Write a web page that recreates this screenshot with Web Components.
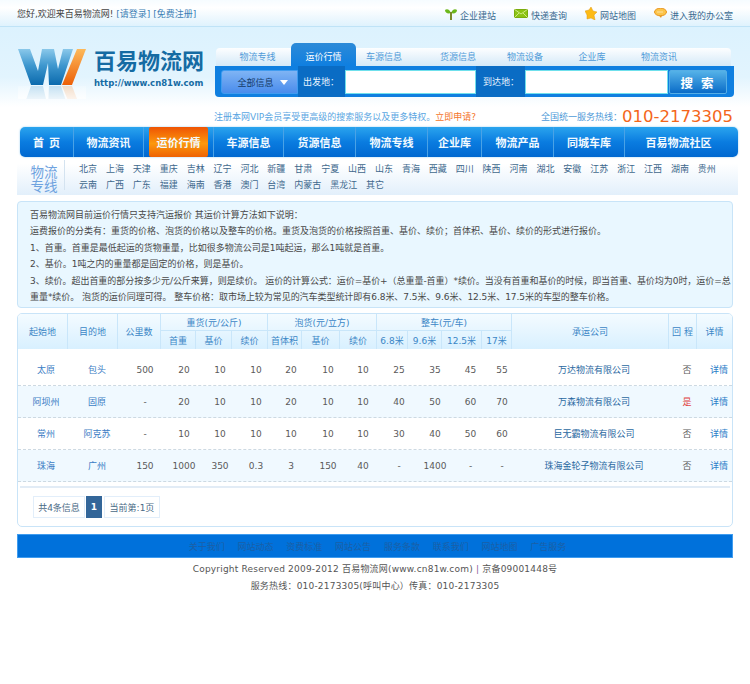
<!DOCTYPE html>
<html lang="zh-CN">
<head>
<meta charset="utf-8">
<title>百易物流网</title>
<style>
html, body { margin: 0; background: #fff; }
body {
    font: 9px "DejaVu Sans", "Noto Sans CJK SC", sans-serif;
    color: #555;
    width: 750px;
    height: 684px;
    overflow: hidden;
}
</style>
</head>
<body>
<site-topbar></site-topbar>
<site-header></site-header>
<main-nav></main-nav>
<city-panel></city-panel>
<notice-box>
    <div>百易物流网目前运价行情只支持汽运报价 其运价计算方法如下说明&#65306;</div>
    <div>运费报价的分类有&#65306;重货的价格、泡货的价格以及整车的价格。重货及泡货的价格按照首重、基价、续价&#65307;首体积、基价、续价的形式进行报价。</div>
    <div>1、首重。首重是最低起运的货物重量&#65292;比如很多物流公司是1吨起运&#65292;那么1吨就是首重。</div>
    <div>2、基价。1吨之内的重量都是固定的价格&#65292;则是基价。</div>
    <div style="letter-spacing:-.05px">3、续价。超出首重的部分按多少元/公斤来算&#65292;则是续价。 运价的计算公式&#65306;运价=基价+&#65288;总重量-首重&#65289;*续价。当没有首重和基价的时候&#65292;即当首重、基价均为0时&#65292;运价=总重量*续价。 泡货的运价同理可得。 整车价格&#65306;取市场上较为常见的汽车类型统计即有6.8米、7.5米、9.6米、12.5米、17.5米的车型的整车价格。</div>
</notice-box>
<rate-table>
    <rate-row data="太原|包头|500|20|10|10|20|10|10|25|35|45|55|万达物流有限公司|否"></rate-row>
    <rate-row alt data="阿坝州|固原|-|20|10|10|20|10|10|40|50|60|70|万森物流有限公司|是"></rate-row>
    <rate-row data="常州|阿克苏|-|10|10|10|10|10|10|30|40|50|60|巨无霸物流有限公司|否"></rate-row>
    <rate-row alt data="珠海|广州|150|1000|350|0.3|3|150|40|-|1400|-|-|珠海金轮子物流有限公司|否"></rate-row>
</rate-table>
<site-footer></site-footer>

<script>
class SiteTopbar extends HTMLElement {
    constructor() {
        super()
        this.attachShadow({ mode: 'open' })
    }
    connectedCallback() {
        this.shadowRoot.innerHTML = `
        <style>
        :host {
            display: flex;
            justify-content: space-between;
            align-items: center;
            height: 26px;
            padding: 0 17px;
            width: 716px;
            background: linear-gradient(#f6fcff, #fff 30%, #dff2fd);
            border-bottom: 1px solid #bfe3f7;
            color: #444;
        }
        a { color: #3d7fb5; }
        nav { display: flex; padding-top: 4px; }
        nav span { display: flex; align-items: center; gap: 3px; color: #3a6a90; margin-right: 18px; }
        nav span:last-child { margin-right: 0; }
        svg { display: block; margin-top: -4px; }
        </style>
        <div>您好,欢迎来百易物流网! <a>[请登录]</a> <a>[免费注册]</a></div>
        <nav>
            <span><svg width="12" height="13" viewBox="0 0 12 13"><path d="M6 6C4 1 1 2 0 3c0 3 3 4 6 3zM6 6c2-5 5-4 6-3 0 3-3 4-6 3z" fill="#6cb81c"/><rect x="5" y="5" width="2" height="8" fill="#7a8a2a"/></svg>企业建站</span>
            <span><svg width="14" height="9" viewBox="0 0 14 9"><rect width="14" height="9" fill="#8cc414" stroke="#5f8a08" stroke-width=".8"/><path d="M0 0l7 5 7-5M0 9l5-5M14 9L9 4" fill="none" stroke="#e0f2a0" stroke-width=".8"/></svg>快递查询</span>
            <span><svg width="12" height="13" viewBox="0 0 12 13"><path d="M6 0l2 4 4 1-3 3 1 5-4-2-4 1 0-4L0 4l4-1z" fill="#fdbb16" stroke="#e09a10" stroke-width=".5"/></svg>网站地图</span>
            <span><svg width="13" height="10" viewBox="0 0 13 10"><ellipse cx="6.5" cy="4" rx="6" ry="3.8" fill="#fcc54a" stroke="#e8951c"/><path d="M5 7.5L7 10l1-2.5z" fill="#e8951c"/><path d="M3.5 4h6" stroke="#fff" stroke-dasharray="1 1"/></svg>进入我的办公室</span>
        </nav>
        `
    }
}

class SiteLogo extends HTMLElement {
    constructor() {
        super()
        this.attachShadow({ mode: 'open' })
    }
    connectedCallback() {
        const w = 'M0 0h12l8 22 4-22h12l4 20 5-20h10L43 36H31l-1-22-5 22H13z'
        this.shadowRoot.innerHTML = `
        <style>
        :host { display: flex; align-items: flex-start; gap: 8px; }
        b {
            display: block;
            font-size: 22px;
            line-height: 24px;
            color: #156ba3;
            margin-top: 1px;
            white-space: nowrap;
        }
        small {
            display: block;
            font-size: 8.5px;
            font-weight: bold;
            line-height: 10px;
            margin-top: 4px;
            color: #156ba3;
            white-space: nowrap;
        }
        </style>
        <svg width="68" height="50" viewBox="0 0 68 50">
            <defs>
                <linearGradient id="bl" x1="0" y1="0" x2="0" y2="1"><stop offset="0" stop-color="#8ac8ea"/><stop offset=".45" stop-color="#3f98cf"/><stop offset="1" stop-color="#0b6aad"/></linearGradient>
                <linearGradient id="or" x1="0" y1="0" x2="0" y2="1"><stop offset="0" stop-color="#fdb95a"/><stop offset="1" stop-color="#ec5f08"/></linearGradient>
                <linearGradient id="fd" x1="0" y1="0" x2="0" y2="1"><stop offset="0" stop-color="#fff" stop-opacity=".25"/><stop offset="1" stop-color="#fff" stop-opacity="1"/></linearGradient>
            </defs>
            <path d="${w}" fill="url(#bl)"/>
            <path d="M44 36L59 0h9L54 36z" fill="url(#or)"/>
            <g transform="translate(0 73) scale(1 -1)" opacity=".35">
                <path d="${w}" fill="#5aa8d8"/>
                <path d="M44 36L59 0h9L54 36z" fill="#f39a50"/>
            </g>
            <rect y="37" width="68" height="13" fill="url(#fd)" opacity=".7"/>
        </svg>
        <div><b>百易物流网</b><small>http://www.cn81w.com</small></div>
        `
    }
}

class SearchBox extends HTMLElement {
    constructor() {
        super()
        this.attachShadow({ mode: 'open' })
    }
    connectedCallback() {
        this.shadowRoot.innerHTML = `
        <style>
        :host { display: block; width: 519px; }
        .tabs {
            position: relative;
            display: flex;
            align-items: flex-end;
            height: 23px;
            margin-left: 1px;
            width: 515px;
            color: #4f9ad8;
        }
        .tabs::before {
            content: "";
            position: absolute;
            left: 0; right: 0; bottom: 0;
            height: 18px;
            border-radius: 4px 4px 0 0;
            background: linear-gradient(#fdfeff, #d4e9f8);
        }
        .tabs span {
            position: relative;
            height: 18px;
            line-height: 19px;
            text-align: center;
            white-space: nowrap;
            box-sizing: border-box;
        }
        .tabs .on {
            height: 23px;
            line-height: 29px;
            color: #fff;
            border-radius: 5px 5px 0 0;
            background: linear-gradient(#2c8ad8, #0f7fe0);
        }
        .bar {
            display: flex;
            align-items: stretch;
            height: 31px;
            background: #0f7fe0;
            border-radius: 0 0 4px 4px;
            color: #eaf6ff;
        }
        .sel {
            width: 77px;
            height: 24px;
            margin: 4px 0 3px 6px;
            box-sizing: border-box;
            border: 1px solid #3f9cf0;
            background: linear-gradient(#7fb4f4, #4a8cec);
            color: #143a66;
            display: flex;
            align-items: center;
            justify-content: center;
            gap: 6px;
            padding-left: 6px;
            border-radius: 3px 0 0 3px;
        }
        .sel i {
            width: 0; height: 0;
            border: 4px solid transparent;
            border-top: 5px solid #fff;
            border-bottom: 0;
        }
        .lb {
            display: flex;
            align-items: center;
            background: #0a6cc4;
            padding-left: 5px;
            box-sizing: border-box;
            white-space: nowrap;
        }
        input {
            display: block;
            box-sizing: border-box;
            margin: 4px 0 3px 0;
            height: 24px;
            border: 1px solid #6fe0ec;
            background: #fff;
            padding: 0;
        }
        button {
            width: 58px;
            height: 24px;
            margin: 4px 0 3px 1px;
            box-sizing: border-box;
            padding: 0 0 0 6px;
            border: 1px solid #55aee6;
            border-radius: 2px;
            background: linear-gradient(#55b2e8, #0a6cc8);
            color: #fff;
            font: bold 12.5px "Noto Sans CJK SC", sans-serif;
            letter-spacing: 8px;
        }
        </style>
        <div class="tabs">
            <span style="width:75px;padding-left:8px">物流专线</span>
            <span class="on" style="width:65px">运价行情</span>
            <span style="width:56px">车源信息</span>
            <span style="width:92px">货源信息</span>
            <span style="width:42px">物流设备</span>
            <span style="width:92px">企业库</span>
            <span style="width:42px">物流资讯</span>
        </div>
        <div class="bar">
            <div class="sel">全部信息<i></i></div>
            <div class="lb" style="width:47px">出发地&#65306;</div>
            <input style="width:131px">
            <div class="lb" style="width:49px;padding-left:7px">到达地&#65306;</div>
            <input style="width:143px">
            <button>搜索</button>
        </div>
        `
    }
}

class SiteHeader extends HTMLElement {
    constructor() {
        super()
        this.attachShadow({ mode: 'open' })
    }
    connectedCallback() {
        this.shadowRoot.innerHTML = `
        <style>
        :host {
            display: flex;
            height: 100px;
            background: linear-gradient(#dcf2fe 0, #e2f4fe 50%, #fff 80%);
        }
        site-logo { margin: 22px 0 0 18px; width: 197px; flex: none; }
        .right { padding-top: 16px; }
        .promo {
            display: flex;
            justify-content: space-between;
            align-items: flex-end;
            height: 27px;
            margin-left: -1px;
            width: 520px;
            color: #5aa6e2;
            white-space: nowrap;
        }
        .promo em { font-style: normal; color: #f4742a; }
        .promo .p1 { margin-bottom: 1px; line-height: 12px;}
        .hot { display: flex; align-items: flex-end; color: #4f9ad8; line-height: 13px; margin-right: 1px; }
        .hot b { font-weight: normal; font-size: 16.5px; line-height: 20px; color: #f4661a; margin-bottom: -3px; }
        </style>
        <site-logo></site-logo>
        <div class="right">
            <search-box></search-box>
            <div class="promo">
                <span class="p1">注册本网VIP会员享受更高级的搜索服务以及更多特权。<em>立即申请?</em></span>
                <span class="hot">全国统一服务热线&#65306;<b>010-2173305</b></span>
            </div>
        </div>
        `
    }
}

class MainNav extends HTMLElement {
    constructor() {
        super()
        this.attachShadow({ mode: 'open' })
    }
    connectedCallback() {
        const items = [['首&nbsp;&nbsp;页', 54], ['物流资讯', 70], ['运价行情', 70, 1], ['车源信息', 70], ['货源信息', 72], ['物流专线', 72], ['企业库', 54], ['物流产品', 72], ['同城车库', 71], ['百易物流社区', 113]]
        this.shadowRoot.innerHTML = `
        <style>
        :host {
            display: flex;
            width: 718px;
            height: 30px;
            margin-left: 20px;
            border-radius: 5px;
            background: linear-gradient(#2aa4ee, #0a7ce0 50%, #0068d0);
            box-shadow: 0 0 2px #8cc8f0;
            color: #f2faff;
            font: bold 11px "Noto Sans CJK SC", sans-serif;
        }
        span {
            flex: none;
            position: relative;
            display: flex;
            align-items: center;
            justify-content: center;
            white-space: nowrap;
            box-sizing: border-box;
            border-right: 1px solid #4aa2e6;
        }
        span:last-child { border-right: 0; padding-right: 6px; }
        span.on::before {
            content: "";
            position: absolute;
            left: 5px; right: 5px; top: 0; bottom: 0;
            border-radius: 2px;
            background: linear-gradient(#ee5404, #fc980c 55%, #ee6204);
        }
        u { position: relative; text-decoration: none; }
        </style>
        ${items.map(i => `<span class="${i[2] ? 'on' : ''}" style="width:${i[1]}px"><u>${i[0]}</u></span>`).join('')}
        `
    }
}

class CityPanel extends HTMLElement {
    constructor() {
        super()
        this.attachShadow({ mode: 'open' })
    }
    connectedCallback() {
        const cities = '北京 上海 天津 重庆 吉林 辽宁 河北 新疆 甘肃 宁夏 山西 山东 青海 西藏 四川 陕西 河南 湖北 安徽 江苏 浙江 江西 湖南 贵州 云南 广西 广东 福建 海南 香港 澳门 台湾 内蒙古 黑龙江 其它'.split(' ')
        this.shadowRoot.innerHTML = `
        <style>
        :host {
            display: flex;
            width: 721px;
            height: 35px;
            margin: 3px 0 0 17px;
            background: linear-gradient(#fff 10%, #e2effb);
        }
        .title {
            width: 48px;
            height: 30px;
            padding: 4px 0 0 7px;
            box-sizing: border-box;
            border-right: 1px solid #d4e3f0;
            text-align: center;
            color: #6ea2df;
            font: 13.5px/14px "Noto Sans CJK SC", sans-serif;
            flex: none;
        }
        .list {
            display: flex;
            flex-wrap: wrap;
            column-gap: 8.9px;
            row-gap: 5px;
            margin: 4px 0 0 14px;
            width: 655px;
            align-content: flex-start;
            line-height: 11px;
            color: #40688c;
        }
        </style>
        <div class="title">物流<br>专线</div>
        <div class="list">${cities.map(c => `<span>${c}</span>`).join('')}</div>
        `
    }
}

class NoticeBox extends HTMLElement {
    constructor() {
        super()
        this.attachShadow({ mode: 'open' })
    }
    connectedCallback() {
        this.shadowRoot.innerHTML = `
        <style>
        :host {
            display: block;
            width: 716px;
            margin: 6px 0 0 17px;
            box-sizing: border-box;
            padding: 5px 0 2px 12px;
            border: 1px solid #c8e4f8;
            border-radius: 4px;
            background: #e9f7ff;
            color: #484848;
            line-height: 16.4px;
        }
        </style>
        <slot></slot>
        `
    }
}

const ROW_COLS = '56px 46px 50px 28px 44px 28px 42px 32px 38px 34px 38px 33px 30px 154px 32px 29px'

class RateRow extends HTMLElement {
    constructor() {
        super()
        this.attachShadow({ mode: 'open' })
    }
    connectedCallback() {
        const d = this.getAttribute('data').split('|')
        const cell = (v, i) => {
            let c = 'n'
            if (i < 2) c = 'city'
            if (i === 13) c = 'co'
            if (i === 14) c = v === '是' ? 'yes' : 'no'
            return `<span class="${c}">${v}</span>`
        }
        this.shadowRoot.innerHTML = `
        <style>
        :host {
            display: grid;
            grid-template-columns: ${ROW_COLS};
            height: 32px;
            align-items: center;
            text-align: center;
            box-sizing: border-box;
            border-bottom: 1px dashed #cdd9e2;
            background: ${this.hasAttribute('alt') ? '#f0f9ff' : '#fff'};
        }
        span { white-space: nowrap; }
        .n { color: #5a5a5a; }
        .city { color: #3a7cc4; }
        .co { color: #2a689f; }
        .no { color: #5a5a5a; }
        .yes { color: #e04040; }
        .more { color: #2a7cc8; padding-left: 3px; }
        </style>
        ${d.map(cell).join('')}<span class="more">详情</span>
        `
    }
}

class RateHead extends HTMLElement {
    constructor() {
        super()
        this.attachShadow({ mode: 'open' })
    }
    connectedCallback() {
        const tall = c => `style="grid-column:${c};grid-row:1/3"`
        this.shadowRoot.innerHTML = `
        <style>
        :host {
            display: grid;
            grid-template-columns: 50px 50px 43px 35px 36px 36px 34px 38px 37px 31px 34px 40px 30px 157px 28px 35px;
            grid-template-rows: 17px 18px;
            height: 35px;
            background: linear-gradient(#f4fbff, #d8f0ff);
            color: #3b86c6;
            border-radius: 4px 4px 0 0;
        }
        div {
            display: flex;
            align-items: center;
            justify-content: center;
            white-space: nowrap;
            box-sizing: border-box;
            border-right: 1px solid #c9e6fa;
        }
        .g { border-bottom: 1px solid #c9e6fa; }
        .last { border-right: 0; }
        </style>
        <div ${tall(1)}>起始地</div>
        <div ${tall(2)}>目的地</div>
        <div ${tall(3)}>公里数</div>
        <div class="g" style="grid-column:4/7">重货(元/公斤)</div>
        <div class="g" style="grid-column:7/10">泡货(元/立方)</div>
        <div class="g" style="grid-column:10/14">整车(元/车)</div>
        <div ${tall(14)}>承运公司</div>
        <div ${tall(15)}>回 程</div>
        <div class="last" ${tall(16)}>详情</div>
        <div style="grid-column:4">首重</div><div>基价</div><div>续价</div>
        <div>首体积</div><div>基价</div><div>续价</div>
        <div>6.8米</div><div>9.6米</div><div>12.5米</div><div>17米</div>
        `
    }
}

class RatePager extends HTMLElement {
    constructor() {
        super()
        this.attachShadow({ mode: 'open' })
    }
    connectedCallback() {
        this.shadowRoot.innerHTML = `
        <style>
        :host {
            display: flex;
            gap: 1px;
            margin: 8px 0 0 15px;
            color: #4a6a86;
        }
        span {
            display: flex;
            align-items: center;
            justify-content: center;
            height: 22px;
            box-sizing: border-box;
            border: 1px solid #e2eefa;
            padding: 0 4px;
            white-space: nowrap;
        }
        .on {
            width: 16px;
            background: #336699;
            border-color: #336699;
            color: #fff;
            font-weight: bold;
            padding: 0;
        }
        </style>
        <span style="width:52px">共4条信息</span><span class="on">1</span><span style="width:56px;margin-left:1px">当前第:1页</span>
        `
    }
}

class RateTable extends HTMLElement {
    constructor() {
        super()
        this.attachShadow({ mode: 'open' })
    }
    connectedCallback() {
        this.shadowRoot.innerHTML = `
        <style>
        :host {
            display: block;
            width: 716px;
            height: 214px;
            margin: 5px 0 0 17px;
            box-sizing: border-box;
            border: 1px solid #c9e4f8;
            border-radius: 5px;
            background: #fff;
        }
        .rows { padding-top: 5px; }
        .sep { height: 2px; margin: 4px 2px 0 2px; background: #e2ecf6; }
        </style>
        <rate-head></rate-head>
        <div class="rows"><slot></slot></div>
        <div class="sep"></div>
        <rate-pager></rate-pager>
        `
    }
}

class SiteFooter extends HTMLElement {
    constructor() {
        super()
        this.attachShadow({ mode: 'open' })
    }
    connectedCallback() {
        const links = ['关于我们', '网站动态', '资费标准', '网站公告', '服务条款', '联系我们', '网站地图', '广告服务']
        this.shadowRoot.innerHTML = `
        <style>
        :host { display: block; margin: 7px 0 0 17px; width: 716px; }
        .bar {
            display: flex;
            justify-content: center;
            align-items: center;
            gap: 12.8px;
            height: 24px;
            box-sizing: border-box;
            padding-left: 5px;
            background: #0071db;
            border: 1px solid #3f9cef;
            color: #1b5fa6;
        }
        p {
            margin: 0;
            text-align: center;
            line-height: 17px;
            color: #555;
            letter-spacing: .2px;
        }
        .bottom { padding-top: 3px; }
        i { font-style: normal; color: #8a5a9a; }
        </style>
        <div class="bar">${links.map(l => `<span>${l}</span>`).join('')}</div>
        <div class="bottom">
            <p>Copyright Reserved 2009-2012 百易物流网(www.cn81w.com) <i>|</i> 京备09001448号</p>
            <p>服务热线&#65306;010-2173305(呼叫中心&#65289;传真&#65306;010-2173305</p>
        </div>
        `
    }
}

customElements.define('site-topbar', SiteTopbar)
customElements.define('site-logo', SiteLogo)
customElements.define('search-box', SearchBox)
customElements.define('site-header', SiteHeader)
customElements.define('main-nav', MainNav)
customElements.define('city-panel', CityPanel)
customElements.define('notice-box', NoticeBox)
customElements.define('rate-row', RateRow)
customElements.define('rate-head', RateHead)
customElements.define('rate-pager', RatePager)
customElements.define('rate-table', RateTable)
customElements.define('site-footer', SiteFooter)
</script>
</body>
</html>
